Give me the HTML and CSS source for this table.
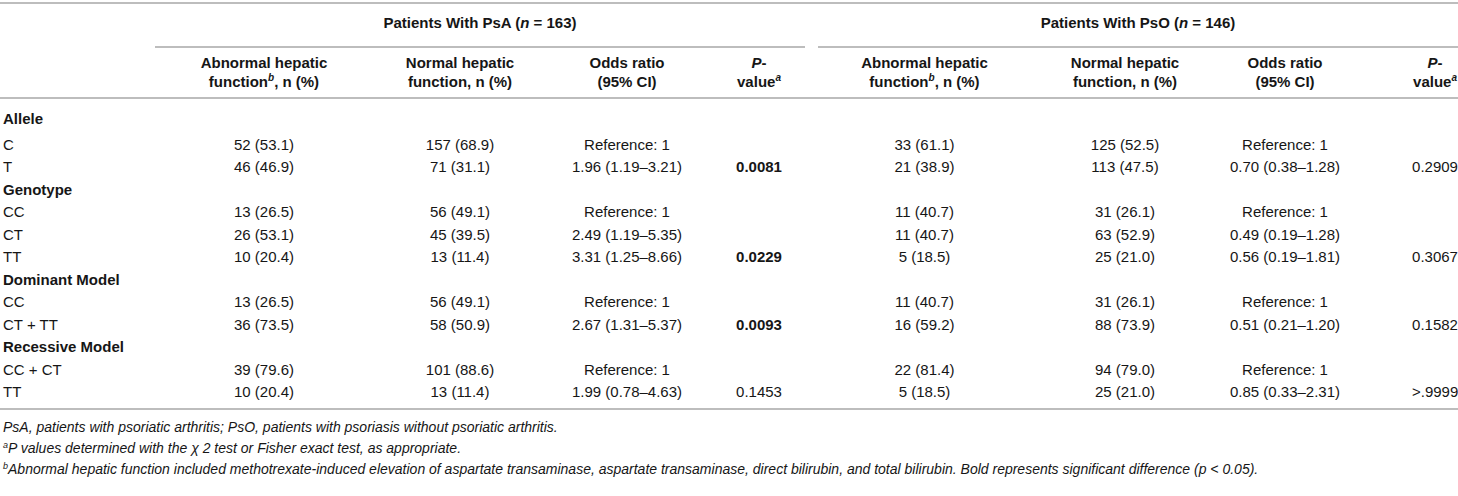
FILE: index.html
```html
<!DOCTYPE html>
<html lang="en">
<head>
<meta charset="utf-8">
<title>Table</title>
<link rel="stylesheet" href="styles.css">
</head>
<body>
<div class="frame">
  <table class="data">
    <colgroup>
      <col class="w0"><col class="w1"><col class="w2"><col class="w3"><col class="w4">
      <col class="w5"><col class="w6"><col class="w7"><col class="w8">
    </colgroup>
    <thead>
      <tr class="grp">
        <th class="blank"></th>
        <th colspan="4" class="g"><div class="gline gleft">Patients With PsA (<i>n</i> = 163)</div></th>
        <th colspan="4" class="g"><div class="gline gright">Patients With PsO (<i>n</i> = 146)</div></th>
      </tr>
      <tr class="sub">
        <th class="blank"></th>
        <th>Abnormal hepatic<br>function<sup><i>b</i></sup>, n (%)</th>
        <th>Normal hepatic<br>function, n (%)</th>
        <th>Odds ratio<br>(95% CI)</th>
        <th><i>P</i>-<br>value<sup><i>a</i></sup></th>
        <th>Abnormal hepatic<br>function<sup><i>b</i></sup>, n (%)</th>
        <th>Normal hepatic<br>function, n (%)</th>
        <th>Odds ratio<br>(95% CI)</th>
        <th class="last"><i>P</i>-<br>value<sup><i>a</i></sup></th>
      </tr>
    </thead>
    <tbody>
      <tr class="sec first"><td>Allele</td><td></td><td></td><td></td><td></td><td></td><td></td><td></td><td class="last"></td></tr>
      <tr><td>C</td><td>52 (53.1)</td><td>157 (68.9)</td><td>Reference: 1</td><td></td><td>33 (61.1)</td><td>125 (52.5)</td><td>Reference: 1</td><td class="last"></td></tr>
      <tr><td>T</td><td>46 (46.9)</td><td>71 (31.1)</td><td>1.96 (1.19–3.21)</td><td><b>0.0081</b></td><td>21 (38.9)</td><td>113 (47.5)</td><td>0.70 (0.38–1.28)</td><td class="last">0.2909</td></tr>
      <tr class="sec"><td>Genotype</td><td></td><td></td><td></td><td></td><td></td><td></td><td></td><td class="last"></td></tr>
      <tr><td>CC</td><td>13 (26.5)</td><td>56 (49.1)</td><td>Reference: 1</td><td></td><td>11 (40.7)</td><td>31 (26.1)</td><td>Reference: 1</td><td class="last"></td></tr>
      <tr><td>CT</td><td>26 (53.1)</td><td>45 (39.5)</td><td>2.49 (1.19–5.35)</td><td></td><td>11 (40.7)</td><td>63 (52.9)</td><td>0.49 (0.19–1.28)</td><td class="last"></td></tr>
      <tr><td>TT</td><td>10 (20.4)</td><td>13 (11.4)</td><td>3.31 (1.25–8.66)</td><td><b>0.0229</b></td><td>5 (18.5)</td><td>25 (21.0)</td><td>0.56 (0.19–1.81)</td><td class="last">0.3067</td></tr>
      <tr class="sec"><td>Dominant Model</td><td></td><td></td><td></td><td></td><td></td><td></td><td></td><td class="last"></td></tr>
      <tr><td>CC</td><td>13 (26.5)</td><td>56 (49.1)</td><td>Reference: 1</td><td></td><td>11 (40.7)</td><td>31 (26.1)</td><td>Reference: 1</td><td class="last"></td></tr>
      <tr><td>CT + TT</td><td>36 (73.5)</td><td>58 (50.9)</td><td>2.67 (1.31–5.37)</td><td><b>0.0093</b></td><td>16 (59.2)</td><td>88 (73.9)</td><td>0.51 (0.21–1.20)</td><td class="last">0.1582</td></tr>
      <tr class="sec"><td>Recessive Model</td><td></td><td></td><td></td><td></td><td></td><td></td><td></td><td class="last"></td></tr>
      <tr><td>CC + CT</td><td>39 (79.6)</td><td>101 (88.6)</td><td>Reference: 1</td><td></td><td>22 (81.4)</td><td>94 (79.0)</td><td>Reference: 1</td><td class="last"></td></tr>
      <tr class="end"><td>TT</td><td>10 (20.4)</td><td>13 (11.4)</td><td>1.99 (0.78–4.63)</td><td>0.1453</td><td>5 (18.5)</td><td>25 (21.0)</td><td>0.85 (0.33–2.31)</td><td class="last">&gt;.9999</td></tr>
    </tbody>
  </table>
  <div class="notes">
    <p><i>PsA, patients with psoriatic arthritis; PsO, patients with psoriasis without psoriatic arthritis.</i></p>
    <p><sup><i>a</i></sup><i>P values determined with the χ 2 test or Fisher exact test, as appropriate.</i></p>
    <p><sup><i>b</i></sup><i>Abnormal hepatic function included methotrexate-induced elevation of aspartate transaminase, aspartate transaminase, direct bilirubin, and total bilirubin. Bold represents significant difference (p &lt; 0.05).</i></p>
  </div>
</div>
</body>
</html>
```

FILE: styles.css
```css
html, body {
  margin: 0;
  padding: 0;
  background: #ffffff;
}
body {
  font-family: "Liberation Sans", Arial, Helvetica, sans-serif;
  color: #161616;
  font-size: 15px;
}
.frame {
  width: 1458px;
  padding-top: 2px;
  overflow: hidden;
}
.data {
  width: 1458px;
  border-collapse: collapse;
  table-layout: fixed;
  border-top: 2px solid #bdbdbd;
}
.w0 { width: 155px; }
.w1 { width: 218px; }
.w2 { width: 174px; }
.w3 { width: 160px; }
.w4 { width: 104px; }
.w5 { width: 227px; }
.w6 { width: 174px; }
.w7 { width: 146px; }
.w8 { width: 100px; }

th, td {
  padding: 3px 0;
  text-align: center;
  white-space: nowrap;
  line-height: 16.5px;
}
th {
  font-weight: bold;
  vertical-align: top;
}
sup {
  font-size: 10px;
  line-height: 0;
  vertical-align: 6px;
}
.grp th {
  padding: 0;
}
.gline {
  padding: 10px 0 14px;
  line-height: 18px;
  border-bottom: 2px solid #bdbdbd;
}
.gleft { margin-right: 6px; }
.gright { margin-left: 7px; }
.sub th {
  padding: 4.5px 0 6.5px;
  line-height: 19px;
  border-bottom: 2px solid #bdbdbd;
}
.sub th.last { padding-left: 54px; }
td:first-child {
  text-align: left;
  padding-left: 3px;
}
.sec td:first-child { font-weight: bold; }
.first td { padding-top: 12px; padding-bottom: 6px; }
.end td { padding-bottom: 7.5px; border-bottom: 2px solid #bdbdbd; }
td.last { padding-left: 54px; }
.notes {
  padding: 7px 0 0 3px;
  font-size: 14px;
  line-height: 21px;
}
.notes p { margin: 0; }
.notes sup { font-size: 9px; vertical-align: 5px; }
```
